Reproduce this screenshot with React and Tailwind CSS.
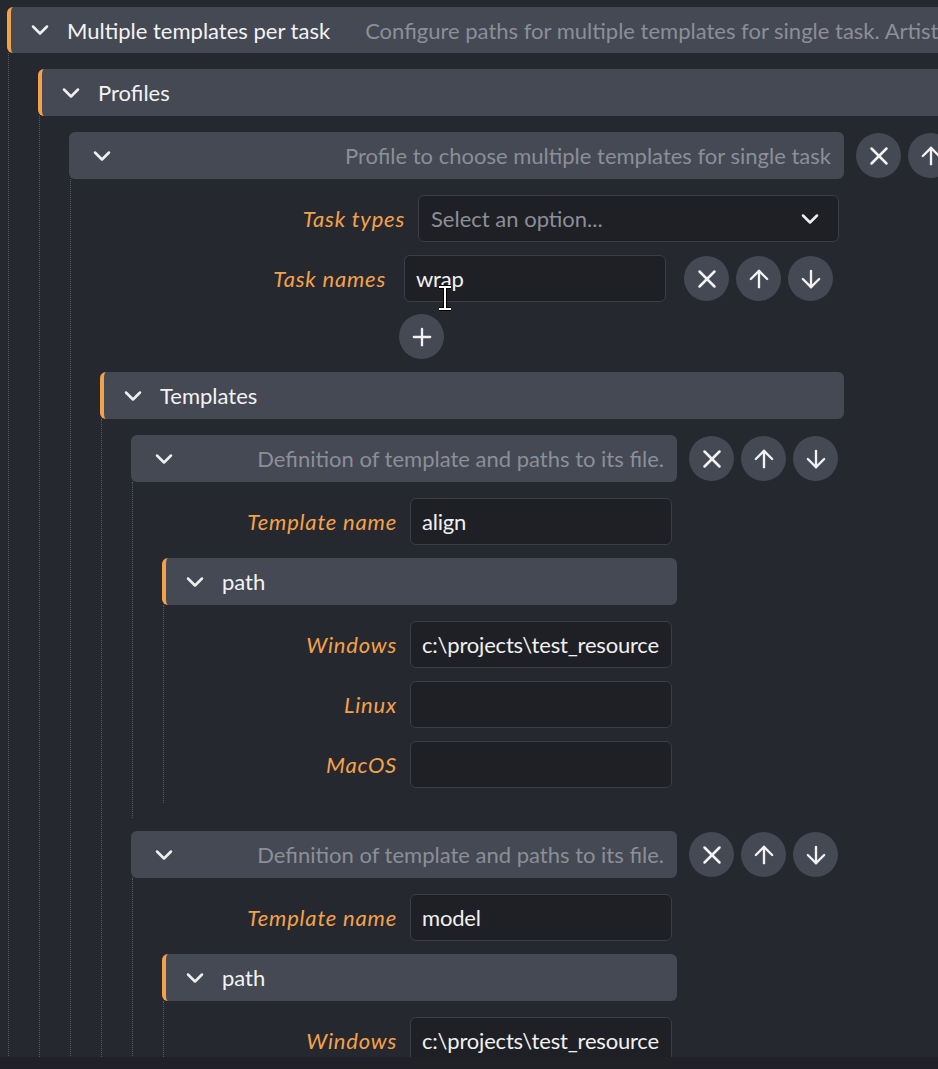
import { ChevronDown, X, ArrowUp, ArrowDown, Plus } from 'lucide-react'

const Header = ({ title, desc, accent, right, tall = 'h-[47px]' }) => (
  <div
    className={
      accent
        ? `flex items-center ${tall} rounded-md bg-[#444954] border-l-4 border-[#f4a24a] pl-[15px] pr-[13px] gap-[13px] overflow-hidden whitespace-nowrap`
        : `flex items-center ${tall} rounded-md bg-[#444954] pl-[19px] pr-[13px] gap-[13px] overflow-hidden whitespace-nowrap`
    }
  >
    <ChevronDown size={28} strokeWidth={2.2} className="shrink-0 text-[#eeeeee]" />
    {title && <span className="text-[#f2f2f2] text-[22px]">{title}</span>}
    {desc && (
      <span className={right ? 'ml-auto text-[#8b8f98] text-[22px]' : 'ml-[22px] text-[#8b8f98] text-[22px]'}>
        {desc}
      </span>
    )}
  </div>
)

const Section = ({ header, children }) => (
  <div className="flex flex-col">
    {header}
    <div className="ml-px border-l border-dotted border-[#555965] pl-[29px] pt-4 pb-[15px] flex flex-col gap-[13px]">
      {children}
    </div>
  </div>
)

const RoundBtn = ({ children }) => (
  <div className="w-[45px] h-[45px] shrink-0 rounded-full bg-[#444954] flex items-center justify-center text-[#f2f2f2]">
    {children}
  </div>
)

const ItemButtons = () => (
  <div className="flex gap-[7px] shrink-0">
    <RoundBtn><X size={30} strokeWidth={2} /></RoundBtn>
    <RoundBtn><ArrowUp size={28} strokeWidth={2} /></RoundBtn>
    <RoundBtn><ArrowDown size={28} strokeWidth={2} /></RoundBtn>
  </div>
)

const ListItem = ({ desc, children }) => (
  <div className="flex items-start">
    <div className="flex-1 min-w-0">
      <Section header={<Header desc={desc} right />}>{children}</Section>
    </div>
    <div className="ml-3 mr-[6px] mt-px">
      <ItemButtons />
    </div>
  </div>
)

const Input = ({ value, w, children }) => (
  <div className={`relative ${w} h-[47px] shrink-0 rounded-md border border-[#3b3e47] bg-[#1e2025] pl-[11px] pr-[6px] flex items-center text-[#f0f0f0] text-[22px] tracking-[-0.2px]`}>
    <div className="overflow-hidden whitespace-nowrap">{value}</div>
    {children}
  </div>
)

const Label = ({ children }) => (
  <div className="flex-1 h-[47px] flex items-center justify-end italic text-[#f4a24a] text-[22px] tracking-[0.8px] whitespace-nowrap">
    {children}
  </div>
)

const Field = ({ label, value }) => (
  <div className="flex items-center gap-[13px] pr-[5px]">
    <Label>{label}</Label>
    <Input value={value} w="w-[262px]" />
  </div>
)

const TemplateItem = ({ name, windows }) => (
  <ListItem desc="Definition of template and paths to its file.">
    <Field label="Template name" value={name} />
    <Section header={<Header title="path" accent />}>
      <Field label="Windows" value={windows} />
      <Field label="Linux" value="" />
      <Field label="MacOS" value="" />
    </Section>
  </ListItem>
)

export default function App() {
  return (
    <div className="h-[1069px] w-[938px] overflow-hidden bg-[#202228] font-[Lato,sans-serif]">
      <div className="h-[1057px] overflow-hidden bg-[#25282f]">
        <div className="w-[1011px] pl-[7px] pt-[7px]">
          <Section
            header={
              <Header
                title="Multiple templates per task"
                desc="Configure paths for multiple templates for single task. Artist can choose which template to use."
                accent
                tall="h-[46px]"
              />
            }
          >
            <Section header={<Header title="Profiles" accent />}>
              <ListItem desc="Profile to choose multiple templates for single task">
                <div className="flex items-center gap-[13px] pr-[5px]">
                  <Label>Task types</Label>
                  <div className="w-[421px] h-[47px] rounded-md border border-[#3b3e47] bg-[#1e2025] pl-3 pr-[14px] flex items-center justify-between">
                    <span className="text-[#8b8f98] text-[22px]">Select an option...</span>
                    <ChevronDown size={28} strokeWidth={2.2} className="text-[#eeeeee]" />
                  </div>
                </div>
                <div className="flex items-start gap-[13px] pr-[5px]">
                  <Label>Task names</Label>
                  <div className="w-[440px] flex flex-col gap-[12px]">
                    <div className="flex items-center pl-[5px] gap-[18px]">
                      <Input value="wrap" w="w-[262px]">
                        <svg className="absolute left-[32px] top-[29px]" width="16" height="26" viewBox="0 0 16 26">
                          <path d="M2 2h12M8 2v22M2 24h12" stroke="#000" strokeWidth="4" fill="none" />
                          <path d="M2 2h12M8 2v22M2 24h12" stroke="#fff" strokeWidth="2" fill="none" />
                        </svg>
                      </Input>
                      <ItemButtons />
                    </div>
                    <div className="w-[45px] h-[45px] rounded-full bg-[#444954] flex items-center justify-center text-[#f2f2f2]">
                      <Plus size={28} strokeWidth={2} />
                    </div>
                  </div>
                </div>
                <Section header={<Header title="Templates" accent />}>
                  <TemplateItem name="align" windows="c:\projects\test_resource" />
                  <TemplateItem name="model" windows="c:\projects\test_resource" />
                </Section>
              </ListItem>
            </Section>
          </Section>
        </div>
      </div>
    </div>
  )
}
